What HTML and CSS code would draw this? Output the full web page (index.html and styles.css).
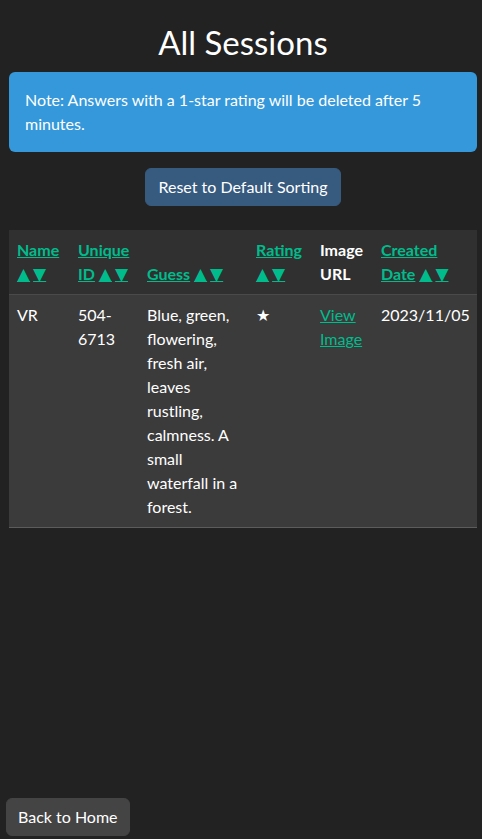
FILE: index.html
```html
<!DOCTYPE html>
<html lang="en">
<head>
<meta charset="utf-8">
<title>All Sessions</title>
<link rel="stylesheet" href="styles.css">
</head>
<body>
<main class="page">
  <h1 class="title">All Sessions</h1>
  <div class="alert">Note: Answers with a 1-star rating will be deleted after 5 minutes.</div>
  <div class="actions">
    <button class="btn btn-primary" type="button">Reset to Default Sorting</button>
  </div>
  <table class="sessions">
    <colgroup>
      <col class="c-name"><col class="c-id"><col class="c-guess"><col class="c-rating"><col class="c-url"><col class="c-date">
    </colgroup>
    <thead>
      <tr>
        <th><a href="#">Name</a> <span class="sort"><a href="#" class="arrow">▲</a><a href="#" class="arrow">▼</a></span></th>
        <th><a href="#">Unique ID</a> <span class="sort"><a href="#" class="arrow">▲</a><a href="#" class="arrow">▼</a></span></th>
        <th><a href="#">Guess</a> <span class="sort"><a href="#" class="arrow">▲</a><a href="#" class="arrow">▼</a></span></th>
        <th><a href="#">Rating</a> <span class="sort"><a href="#" class="arrow">▲</a><a href="#" class="arrow">▼</a></span></th>
        <th>Image URL</th>
        <th><a href="#">Created Date</a> <span class="sort"><a href="#" class="arrow">▲</a><a href="#" class="arrow">▼</a></span></th>
      </tr>
    </thead>
    <tbody>
      <tr>
        <td>VR</td>
        <td>504-6713</td>
        <td>Blue, green, flowering, fresh air, leaves rustling, calmness. A small waterfall in a forest.</td>
        <td>★</td>
        <td><a href="#">View Image</a></td>
        <td>2023/11/05</td>
      </tr>
    </tbody>
  </table>
</main>
<button class="btn btn-back" type="button">Back to Home</button>
</body>
</html>
```

FILE: styles.css
```css
* { box-sizing: border-box; }
html, body { margin: 0; padding: 0; }
body {
  background: #222222;
  color: #ffffff;
  font-family: Lato, "Noto Sans", "Liberation Sans", sans-serif;
  font-size: 16px;
  line-height: 1.5;
  min-height: 839px;
}
.page {
  padding: 22px 5px 0 9px;
}
.title {
  margin: 0 0 10px;
  font-size: 33px;
  font-weight: 400;
  line-height: 40px;
  text-align: center;
}
.alert {
  background: #3498db;
  color: #fff;
  padding: 16px;
  border-radius: 6px;
  margin-bottom: 16px;
}
.actions {
  display: flex;
  justify-content: center;
  margin-bottom: 24px;
}
.btn {
  font-family: inherit;
  font-size: 16px;
  line-height: 24px;
  color: #fff;
  border: 1px solid transparent;
  border-radius: 6px;
  padding: 6px 12px;
  cursor: pointer;
}
.btn-primary {
  background: #375a7f;
  border-color: #375a7f;
}
.btn-back {
  position: fixed;
  left: 6px;
  bottom: 3px;
  padding: 6px 11px;
  background: #444444;
  border-color: #444444;
}
.sessions {
  width: 100%;
  border-collapse: collapse;
  table-layout: fixed;
}
.c-name { width: 61px; }
.c-id { width: 69px; }
.c-guess { width: 109px; }
.c-rating { width: 64px; }
.c-url { width: 61px; }
.c-date { width: 104px; }
.sessions th, .sessions td {
  padding: 8px;
  text-align: left;
}
.sessions thead th {
  background: #303030;
  font-weight: 700;
  vertical-align: bottom;
  border-bottom: 1px solid #4a4a4a;
}
.sessions tbody td {
  background: #3b3b3b;
  vertical-align: top;
  border-bottom: 1px solid #5c5c5c;
}
.sessions a {
  color: #00bc8c;
  text-decoration: underline;
}
.sort {
  white-space: nowrap;
}
.sessions .arrow {
  font-family: "DejaVu Sans", sans-serif;
  font-size: 17px;
  line-height: 1;
}
.sessions .arrow + .arrow {
  margin-left: 3px;
}
```
